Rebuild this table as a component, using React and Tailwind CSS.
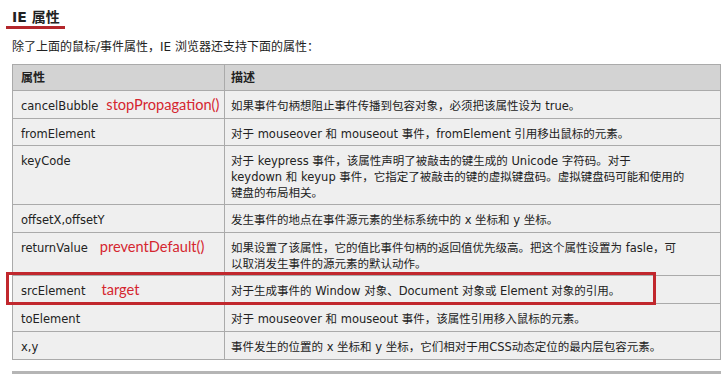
import React from "react";

const rows = [
  {
    name: "cancelBubble",
    note: "stopPropagation()",
    noteGap: "ml-[8px]",
    h: "h-[28px]",
    desc: ["如果事件句柄想阻止事件传播到包容对象，必须把该属性设为 true。"],
  },
  {
    name: "fromElement",
    h: "h-[27px]",
    desc: ["对于 mouseover 和 mouseout 事件，fromElement 引用移出鼠标的元素。"],
  },
  {
    name: "keyCode",
    h: "h-[59px]",
    desc: [
      "对于 keypress 事件，该属性声明了被敲击的键生成的 Unicode 字符码。对于",
      "keydown 和 keyup 事件，它指定了被敲击的键的虚拟键盘码。虚拟键盘码可能和使用的",
      "键盘的布局相关。",
    ],
  },
  {
    name: "offsetX,offsetY",
    h: "h-[28px]",
    desc: ["发生事件的地点在事件源元素的坐标系统中的 x 坐标和 y 坐标。"],
  },
  {
    name: "returnValue",
    note: "preventDefault()",
    noteGap: "ml-[12px]",
    h: "h-[43px]",
    desc: [
      "如果设置了该属性，它的值比事件句柄的返回值优先级高。把这个属性设置为 fasle，可",
      "以取消发生事件的源元素的默认动作。",
    ],
  },
  {
    name: "srcElement",
    note: "target",
    noteGap: "ml-[16px]",
    h: "h-[28px]",
    desc: ["对于生成事件的 Window 对象、Document 对象或 Element 对象的引用。"],
  },
  {
    name: "toElement",
    h: "h-[28px]",
    desc: ["对于 mouseover 和 mouseout 事件，该属性引用移入鼠标的元素。"],
  },
  {
    name: "x,y",
    h: "h-[28px]",
    desc: ["事件发生的位置的 x 坐标和 y 坐标，它们相对于用CSS动态定位的最内层包容元素。"],
  },
];

const body = {
  fontFamily: '"DejaVu Sans", Verdana, "Noto Sans CJK SC", sans-serif',
};
const note = {
  fontFamily: 'Lato, "Open Sans", sans-serif',
};

export default function App() {
  return (
    <div
      className="relative w-[728px] h-[382px] bg-white text-[#222] overflow-hidden"
      style={body}
    >
      <h2 className="pl-[12px] pt-[9px] text-[14px] font-bold leading-[17px]">IE 属性</h2>
      <div className="ml-[6px] w-[59px] h-[3px] bg-[#b3262b]" />
      <p className="pl-[12px] mt-[10px] text-[12px] leading-[16px]">
        除了上面的鼠标/事件属性，IE 浏览器还支持下面的属性：
      </p>

      {/* property table */}
      <div className="ml-[12px] mt-[9px] w-[709px] border-l border-t border-[#aaa] text-[11.5px] leading-[16px]">
        <div className="flex h-[26px] bg-[#d3d3d3] font-bold text-[12px]">
          <div className="w-[212px] shrink-0 border-r border-b border-[#aaa] pl-[8px] pt-[5px]">属性</div>
          <div className="flex-1 border-r border-b border-[#aaa] pl-[6px] pt-[5px]">描述</div>
        </div>
        {rows.map((r) => (
          <div key={r.name} className={`flex ${r.h} bg-[#efefef]`}>
            <div className="w-[212px] shrink-0 border-r border-b border-[#aaa] pl-[8px] pt-[7px] whitespace-nowrap">
              <span>{r.name}</span>
              {r.note && (
                <span
                  className={`${r.noteGap} text-[14.6px] leading-[10px] text-[#d5262f]`}
                  style={note}
                >
                  {r.note}
                </span>
              )}
            </div>
            <div className="flex-1 border-r border-b border-[#aaa] pl-[6px] pt-[7px] whitespace-nowrap">
              {r.desc.map((line) => (
                <div key={line}>{line}</div>
              ))}
            </div>
          </div>
        ))}
      </div>

      <div className="ml-[12px] mt-[11px] w-[709px] h-[3px] bg-[#b5b5b5]" />

      {/* highlight frame drawn over the srcElement row */}
      <div className="absolute left-[6px] top-[272px] w-[650px] h-[33px] border-[3px] border-[#c1272d] pointer-events-none" />
    </div>
  );
}
